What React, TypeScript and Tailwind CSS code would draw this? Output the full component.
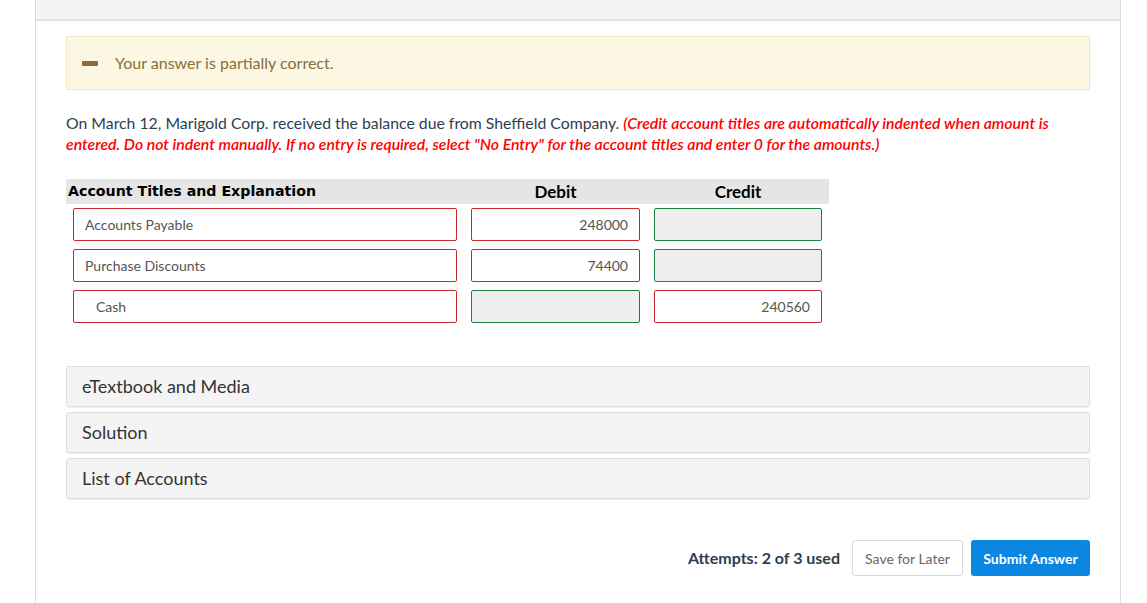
const lato = "font-['Lato','Liberation_Sans',sans-serif]"

type Cell = { value: string; state: "red" | "green" }
type Row = { account: string; indent?: boolean; debit: Cell; credit: Cell }

const rows: Row[] = [
  { account: "Accounts Payable", debit: { value: "248000", state: "red" }, credit: { value: "", state: "green" } },
  { account: "Purchase Discounts", debit: { value: "74400", state: "red" }, credit: { value: "", state: "green" } },
  { account: "Cash", indent: true, debit: { value: "", state: "green" }, credit: { value: "240560", state: "red" } },
]

function AmountBox({ cell }: { cell: Cell }) {
  const filled = cell.value !== ""
  return (
    <div
      className={
        "flex h-[33px] items-center justify-end rounded-[2px] border px-[11px] text-[14px] text-[#555] " +
        (cell.state === "red" ? "border-[#c8282c] " : "border-[#1b8045] ") +
        (filled ? "bg-white" : "bg-[#eeeeee]")
      }
    >
      {cell.value}
    </div>
  )
}

const panels = ["eTextbook and Media", "Solution", "List of Accounts"]

export default function App() {
  return (
    <div className={`min-h-[603px] bg-white ${lato}`}>
      <div className="ml-[35px] w-[1086px] min-h-[603px] border-x border-[#dcdcdc]">
        {/* top strip */}
        <div className="h-[21px] border-b-2 border-[#e2e2e2] bg-[#f4f4f4]" />

        <div className="px-[30px] pt-[15px]">
          {/* feedback banner */}
          <div className="flex h-[54px] items-center border border-[#f6e7c3] bg-[#fbf7e2] pl-[15px]">
            <div className="h-[5px] w-[16px] rounded-[1px] bg-[#8a6d3b]" />
            <span className="ml-[17px] text-[16px] text-[#8a6d3b]">Your answer is partially correct.</span>
          </div>

          {/* question */}
          <p className="mt-[22px] text-[15.8px] leading-[21px] text-[#2d3e50]">
            On March 12, Marigold Corp. received the balance due from Sheffield Company.{" "}
            <span className="font-semibold italic text-[#ff0000]">
              (Credit account titles are automatically indented when amount is entered. Do not indent manually. If no entry is required, select "No Entry" for the account titles and enter 0 for the amounts.)
            </span>
          </p>

          {/* journal table */}
          <div className="mt-[25px] w-[763px]">
            <div className="grid h-[25px] grid-cols-[398px_183px_182px] items-center bg-[#e5e5e5] font-bold text-black">
              <div className="pl-[2px] font-['DejaVu_Sans',sans-serif] text-[14.2px]">Account Titles and Explanation</div>
              <div className="text-center text-[17px]">Debit</div>
              <div className="text-center text-[17px]">Credit</div>
            </div>
            {rows.map((r, i) => (
              <div key={r.account} className={"grid grid-cols-[398px_183px_182px] " + (i === 0 ? "mt-[4px]" : "mt-[8px]")}>
                <div className="px-[7px]">
                  <div
                    className={
                      "flex h-[33px] items-center rounded-[2px] border border-[#c8282c] bg-white text-[14px] text-[#555] " +
                      (r.indent ? "pl-[22px]" : "pl-[11px]")
                    }
                  >
                    {r.account}
                  </div>
                </div>
                <div className="px-[7px]">
                  <AmountBox cell={r.debit} />
                </div>
                <div className="px-[7px]">
                  <AmountBox cell={r.credit} />
                </div>
              </div>
            ))}
          </div>

          {/* collapsible panels */}
          <div className="mt-[43px] flex flex-col gap-[5px]">
            {panels.map((p) => (
              <div
                key={p}
                className="flex h-[41px] items-center rounded-[3px] border border-[#dedede] bg-[#f4f4f4] pl-[15px] text-[18px] text-[#333] shadow-[0_1px_1px_rgba(0,0,0,0.06)]"
              >
                {p}
              </div>
            ))}
          </div>

          {/* footer actions */}
          <div className="mt-[41px] flex items-center justify-end">
            <span className="text-[16px] font-bold text-[#2d3e50]">Attempts: 2 of 3 used</span>
            <button className="ml-[12px] h-[36px] w-[111px] rounded-[3px] border border-[#d9d9d9] bg-white text-[14px] text-[#666]">
              Save for Later
            </button>
            <button className="ml-[8px] h-[36px] w-[119px] rounded-[3px] bg-[#0b87e1] text-[14px] font-bold text-white">
              Submit Answer
            </button>
          </div>
        </div>
      </div>
    </div>
  )
}
